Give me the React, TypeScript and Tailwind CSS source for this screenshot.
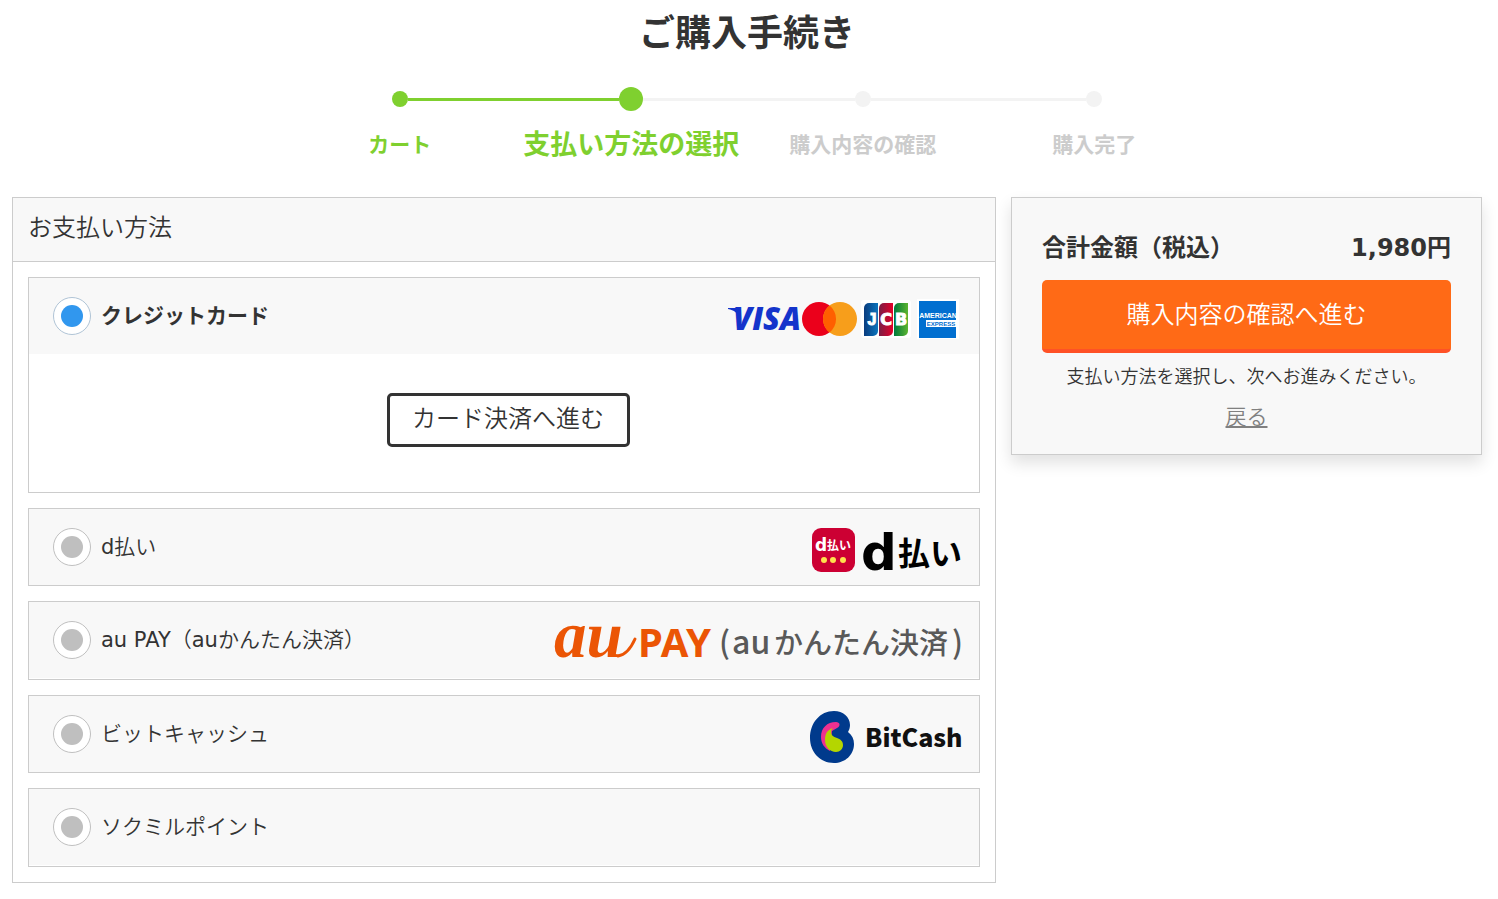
import React, { useState } from 'react';
import clsx from 'clsx';

const JP = "'Noto Sans CJK JP', sans-serif";

function CardLogos() {
  return (
    <svg className="overflow-visible" width="235" height="60" viewBox="0 0 235 60" role="img" aria-label="VISA, Mastercard, JCB, American Express">
      <text x="7" y="44" fontFamily="'Open Sans', sans-serif" fontSize="31" fontWeight="800" fontStyle="italic" fill="#1434cb">
        VISA
      </text>
      <path d="M2 22h9l3 3v8C12 27 8 24 2 23z" fill="#1434cb" />

      <circle cx="93" cy="33" r="17" fill="#eb001b" />
      <circle cx="114" cy="33" r="17" fill="#f79e1b" />
      <path d="M103.500 19.600a17 17 0 0 1 0 26.800a17 17 0 0 1 0-26.800z" fill="#ff5f00" />

      <defs>
        <linearGradient id="jcb-blue">
          <stop offset="0" stopColor="#0a3c7e" />
          <stop offset="1" stopColor="#0b75bd" />
        </linearGradient>
        <linearGradient id="jcb-red">
          <stop offset="0" stopColor="#7a1f45" />
          <stop offset="1" stopColor="#e4002b" />
        </linearGradient>
        <linearGradient id="jcb-green">
          <stop offset="0" stopColor="#007a3d" />
          <stop offset="1" stopColor="#5cb531" />
        </linearGradient>
      </defs>
      <rect x="135" y="14" width="50" height="38" rx="3" fill="#fff" />
      <path d="M143 17h9v28a5 5 0 0 1-5 5h-9V22a5 5 0 0 1 5-5z" fill="url(#jcb-blue)" />
      <path d="M158 17h9v28a5 5 0 0 1-5 5h-9V22a5 5 0 0 1 5-5z" fill="url(#jcb-red)" />
      <path d="M173 17h9v28a5 5 0 0 1-5 5h-9V22a5 5 0 0 1 5-5z" fill="url(#jcb-green)" />
      <g fontSize="16" fontWeight="700" fill="#fff" stroke="#fff" strokeWidth="1" textAnchor="middle">
        <text x="146" y="39" fontFamily="'Liberation Sans', sans-serif">J</text>
        <text x="160" y="39" fontFamily="'DejaVu Sans', sans-serif">C</text>
        <text x="175" y="39" fontFamily="'DejaVu Sans', sans-serif">B</text>
      </g>

      <rect x="191" y="13" width="42" height="40" fill="#fff" />
      <rect x="193" y="15" width="37" height="37" fill="#016fd0" />
      <text x="212" y="32" fontFamily="'Liberation Sans', sans-serif" fontSize="7" fontWeight="700" fill="#fff" textAnchor="middle">
        AMERICAN
      </text>
      <rect x="200" y="34" width="30" height="7" fill="#fff" />
      <text x="215" y="40" fontFamily="'Liberation Sans', sans-serif" fontSize="6" fontWeight="700" fill="#016fd0" textAnchor="middle">
        EXPRESS
      </text>
    </svg>
  );
}

function DPayLogo() {
  return (
    <svg className="overflow-visible" width="150" height="60" viewBox="0 0 150 60" role="img" aria-label="d払い">
      <rect x="1" y="11" width="43" height="44" rx="9" fill="#cc0033" />
      <text x="4" y="34" fontFamily="'DejaVu Sans', sans-serif" fontSize="17" fontWeight="700" fill="#fff">d</text>
      <text x="16" y="33" fontFamily={JP} fontSize="12" fontWeight="700" fill="#fff">払い</text>
      <circle cx="13" cy="43" r="3" fill="#ffe14d" />
      <circle cx="22" cy="43" r="3" fill="#ffe14d" />
      <circle cx="32" cy="43" r="3" fill="#ffe14d" />
      <text x="50" y="53" fontFamily="'DejaVu Sans', sans-serif" fontSize="50" fontWeight="700" fill="#000">d</text>
      <text x="87" y="48" fontFamily={JP} fontSize="32" fontWeight="700" fill="#000">払い</text>
    </svg>
  );
}

function AuPayLogo() {
  return (
    <svg className="overflow-visible" width="410" height="60" viewBox="0 0 410 60" role="img" aria-label="au PAY（auかんたん決済）">
      <text x="3" y="47" fontFamily="'Liberation Serif', serif" fontSize="65" fontWeight="700" fontStyle="italic" fill="#eb5505">
        au
      </text>
      <path d="M67 46c7-1 13-8 17-17" fill="none" stroke="#eb5505" strokeWidth="3" strokeLinecap="round" />
      <text x="87" y="47" fontFamily="'Noto Sans', sans-serif" fontSize="40" fontWeight="700" fill="#eb5505">PAY</text>
      <g fontFamily={JP} fontWeight="500" fill="#595959">
        <text x="168" y="44" fontSize="31">(</text>
        <text x="181" y="44" fontSize="32">au</text>
        <text x="223" y="44" fontSize="29">かんたん決済</text>
        <text x="401" y="44" fontSize="31">)</text>
      </g>
    </svg>
  );
}

function BitCashLogo() {
  return (
    <svg className="overflow-visible" width="152" height="60" viewBox="0 0 152 60" role="img" aria-label="BitCash">
      <path
        d="M25 7c9 0 16 6 16 14 0 3-1 5-2 7 4 3 6 7 6 12 0 11-9 19-20 19C11 59 1 48 1 34 1 19 11 7 25 7z"
        fill="#003a8c"
      />
      <path d="M27 18c-9 0-15 6-15 15 0 6 3 11 9 14l2-20 5-3c4-2 3-6-1-6z" fill="#ee3190" />
      <path d="M24 24c-6 2-8 6-8 12 0 7 5 12 11 12 4 0 7-3 7-7s-3-6-6-7c-4-1-6-3-6-6 0-2 1-3 2-4z" fill="#b4d600" />
      <text x="56" y="43" fontFamily={JP} fontSize="25" fontWeight="900" fill="#111">BitCash</text>
    </svg>
  );
}

const steps = [
  { label: 'カート', state: 'done' },
  { label: '支払い方法の選択', state: 'current' },
  { label: '購入内容の確認', state: 'todo' },
  { label: '購入完了', state: 'todo' },
];

const methods = [
  { id: 'credit', label: 'クレジットカード', logo: <CardLogos /> },
  { id: 'dpay', label: 'd払い', logo: <DPayLogo /> },
  { id: 'aupay', label: 'au PAY（auかんたん決済）', logo: <AuPayLogo /> },
  { id: 'bitcash', label: 'ビットキャッシュ', logo: <BitCashLogo /> },
  { id: 'point', label: 'ソクミルポイント', logo: null },
];

// Latin letters need a regular weight beside the lighter Japanese text
function MethodLabel({ text, active }: { text: string; active: boolean }) {
  return (
    <span className={clsx('ml-[10px] flex-1', active && 'font-bold')}>
      {text.split(/([A-Za-z ]+)/).map((part, i) =>
        i % 2 === 1 ? (
          <span key={i} className={active ? 'font-bold' : 'font-normal'}>
            {part}
          </span>
        ) : (
          part
        )
      )}
    </span>
  );
}

function Steps() {
  return (
    <ol className="mx-auto flex w-[63%]">
      {steps.map((step, i) => {
        const current = step.state === 'current';
        const reached = step.state !== 'todo';
        return (
          <li key={step.label} className="flex flex-1 flex-col items-center">
            <div className="flex h-6 w-full items-center">
              <span
                className={clsx('h-[3px] flex-1', i === 0 ? 'bg-transparent' : reached ? 'bg-[#7fd02f]' : 'bg-[#f3f3f3]')}
              />
              <span
                className={clsx('rounded-full', current ? 'size-6' : 'size-4', reached ? 'bg-[#7fd02f]' : 'bg-[#f3f3f3]')}
              />
              <span
                className={clsx(
                  'h-[3px] flex-1',
                  i === steps.length - 1 ? 'bg-transparent' : step.state === 'done' ? 'bg-[#7fd02f]' : 'bg-[#f3f3f3]'
                )}
              />
            </div>
            <span
              className={clsx(
                'mt-[13px] leading-[42px] font-bold whitespace-nowrap',
                current ? 'text-[27px]' : 'text-[21px]',
                reached ? 'text-[#7fd02f]' : 'text-[#cccccc]'
              )}
            >
              {step.label}
            </span>
          </li>
        );
      })}
    </ol>
  );
}

export default function App() {
  const [selected, setSelected] = useState('credit');

  return (
    <div className="bg-white pr-4 pb-4 pl-3 font-['DejaVu_Sans','Noto_Sans_CJK_JP',sans-serif] font-[350] text-[#333333]">
      <h1 className="pt-[7px] pb-[26px] text-center text-4xl leading-[54px] font-bold">ご購入手続き</h1>
      <Steps />

      <div className="mt-[31px] flex items-start gap-[15px]">
        <main className="min-w-0 flex-1 border border-[#cccccc]">
          <h2 className="border-b border-[#cccccc] bg-[#f8f8f8] px-[15px] pt-3 pb-[15px] text-2xl leading-9 font-[350]">
            お支払い方法
          </h2>
          <ul className="flex flex-col gap-[15px] p-[15px]">
            {methods.map((m) => {
              const active = selected === m.id;
              return (
                <li key={m.id} className="border border-[#cccccc] bg-white odd:min-h-[79px] even:min-h-[78px]">
                  <label className="flex h-[76px] cursor-pointer items-center bg-[#f8f8f8] pr-[18px] pl-6 text-[21px] leading-8">
                    <input
                      type="radio"
                      name="payment"
                      value={m.id}
                      checked={active}
                      onChange={() => setSelected(m.id)}
                      className="grid size-[38px] flex-none cursor-pointer appearance-none place-content-center rounded-full border border-[#c0c0c0] bg-white before:block before:size-[22px] before:rounded-full before:bg-[#bfbfbf] checked:border-[#b0c4d6] checked:before:bg-[#3197ee]"
                    />
                    <MethodLabel text={m.label} active={active} />
                    {m.logo}
                  </label>
                  {m.id === 'credit' && active && (
                    <div className="flex justify-center pt-[39px] pb-[45px] pl-2">
                      <button
                        type="button"
                        className="w-[243px] rounded-[5px] border-3 border-[#333333] bg-white pt-[5px] pb-[7px] text-2xl leading-9"
                      >
                        カード決済へ進む
                      </button>
                    </div>
                  )}
                </li>
              );
            })}
          </ul>
        </main>

        <aside className="w-[471px] border border-[#cccccc] bg-[#f8f8f8] px-[30px] pt-8 pb-[21px] text-center shadow-[0_8px_15px_rgba(0,0,0,0.12)]">
          <dl className="flex justify-between text-2xl leading-9 font-bold">
            <dt>合計金額（税込）</dt>
            <dd>1,980円</dd>
          </dl>
          <button
            type="button"
            className="mt-[14px] w-full rounded-[5px] border-b-4 border-[#ff5126] bg-[#ff6a16] pt-[17px] pb-4 text-2xl leading-9 text-white"
          >
            購入内容の確認へ進む
          </button>
          <p className="mt-[10px] text-lg leading-7">支払い方法を選択し、次へお進みください。</p>
          <a href="#back" className="mt-[10px] inline-block text-[21px] leading-8 text-[#808080] underline">
            戻る
          </a>
        </aside>
      </div>
    </div>
  );
}
